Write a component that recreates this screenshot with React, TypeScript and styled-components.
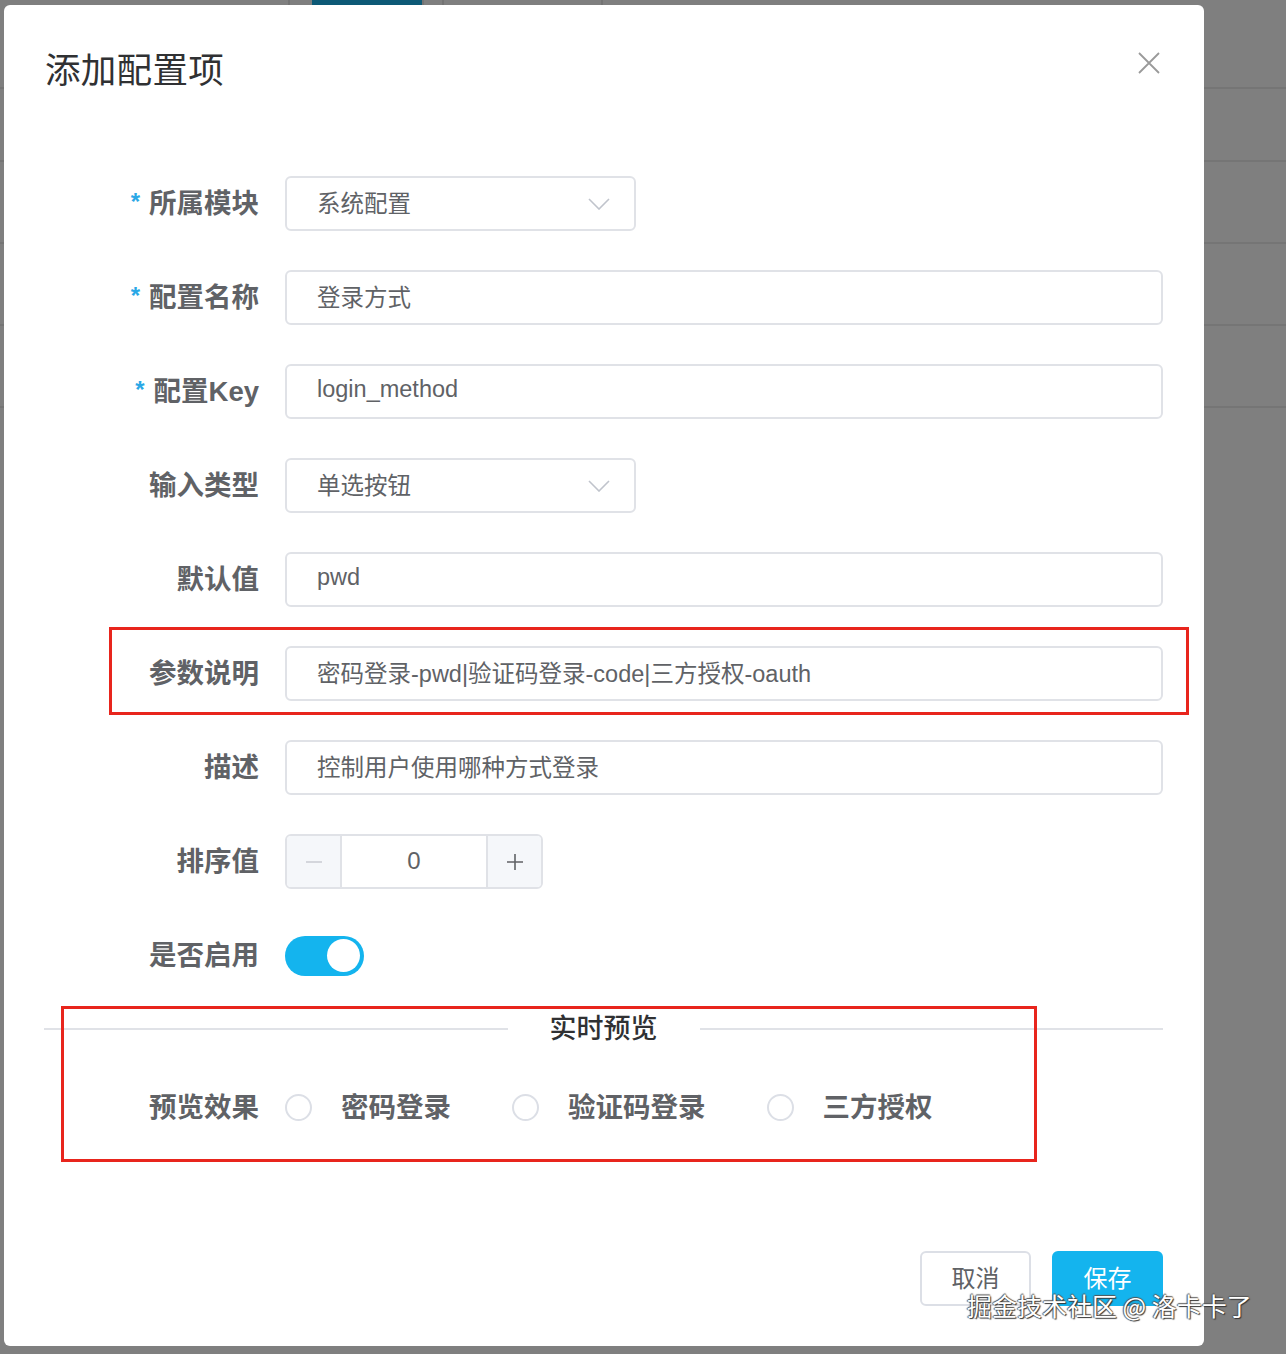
import styled, { createGlobalStyle } from "styled-components";

const GlobalStyle = createGlobalStyle`
  html, body {
    margin: 0;
    padding: 0;
    background: #808080;
  }
  * {
    box-sizing: border-box;
  }
`;

const FONT = `"Liberation Sans", "Noto Sans CJK SC", sans-serif`;
const BRAND = "#14b4ee";

const Stage = styled.div`
  position: relative;
  width: 1286px;
  height: 1354px;
  overflow: hidden;
  font-family: ${FONT};
`;

/* page behind the modal */
const Page = styled.div`
  width: 100%;
  height: 100%;
  background: #fff;
  display: flex;
  flex-direction: column;
`;

const TabStrip = styled.div`
  display: flex;
  height: 5px;
`;

const Tab = styled.div<{ $w: number; $active?: boolean; $last?: boolean }>`
  width: ${(p) => p.$w}px;
  border-right: ${(p) => (p.$last ? "none" : "2px solid #e6e6e6")};
  background: ${(p) => (p.$active ? "#1bb2ec" : "transparent")};
`;

const PageRow = styled.div<{ $h: number }>`
  height: ${(p) => p.$h}px;
  border-bottom: 2px solid #eaeaea;
`;

const Mask = styled.div`
  position: absolute;
  inset: 0;
  background: rgba(0, 0, 0, 0.5);
`;

/* dialog */
const Dialog = styled.div`
  position: absolute;
  left: 4px;
  top: 5px;
  width: 1200px;
  height: 1341px;
  background: #fff;
  border-radius: 6px;
  display: flex;
  flex-direction: column;
`;

const Header = styled.div`
  display: flex;
  align-items: center;
  justify-content: space-between;
  padding: 37px 44px 7px 41px;
  height: 96px;
`;

const Title = styled.div`
  font-family: "Noto Sans CJK SC", sans-serif;
  font-size: 35.5px;
  line-height: 52px;
  color: #303133;
  letter-spacing: 0.3px;
`;

const CloseBtn = styled.div`
  width: 22px;
  height: 22px;
  display: flex;
  align-items: center;
  justify-content: center;
  margin-top: -10px;
`;

const Body = styled.div`
  padding: 75px 41px 0 40px;
  display: flex;
  flex-direction: column;
`;

const Rows = styled.div`
  display: flex;
  flex-direction: column;
  gap: 39px;
`;

const Row = styled.div`
  display: flex;
  align-items: center;
  height: 55px;
  gap: 26px;
`;

const Label = styled.div`
  width: 215px;
  flex-shrink: 0;
  text-align: right;
  font-size: 27.5px;
  font-weight: 700;
  color: #606266;
  white-space: nowrap;
  padding-bottom: 5px;
`;

const Star = styled.span`
  color: #2aa8e6;
  font-size: 24px;
  margin-right: 9px;
  position: relative;
  top: -3px;
`;

const Field = styled.div<{ $w?: number }>`
  width: ${(p) => (p.$w ? `${p.$w}px` : "100%")};
  height: 55px;
  border: 2px solid #e0e2e7;
  border-radius: 6px;
  display: flex;
  align-items: center;
  justify-content: space-between;
  padding: 0 24px 0 30px;
  font-size: 23.5px;
  color: #606266;
  white-space: nowrap;
`;

const FieldText = styled.span`
  padding-bottom: 4px;
`;

const NumberBox = styled.div`
  width: 258px;
  height: 55px;
  border: 2px solid #e0e2e7;
  border-radius: 6px;
  display: flex;
  overflow: hidden;
`;

const StepBtn = styled.div<{ $disabled?: boolean; $side: "left" | "right" }>`
  width: 55px;
  background: #f5f7fa;
  display: flex;
  align-items: center;
  justify-content: center;
  ${(p) => (p.$side === "left" ? "border-right" : "border-left")}: 2px solid #e0e2e7;
  color: ${(p) => (p.$disabled ? "#c8cbd2" : "#606266")};
`;

const NumberValue = styled.div`
  flex: 1;
  display: flex;
  align-items: center;
  justify-content: center;
  font-size: 24px;
  color: #606266;
  padding-bottom: 2px;
`;

const Switch = styled.div<{ $on: boolean }>`
  width: 79px;
  height: 40px;
  border-radius: 20px;
  background: ${(p) => (p.$on ? BRAND : "#dcdfe6")};
  display: flex;
  align-items: center;
  justify-content: ${(p) => (p.$on ? "flex-end" : "flex-start")};
  padding: 0 4px;
`;

const Knob = styled.div`
  width: 33px;
  height: 33px;
  border-radius: 50%;
  background: #fff;
`;

const Divider = styled.div`
  display: flex;
  align-items: center;
  height: 40px;
  margin-top: 26px;
`;

const DividerLine = styled.div`
  flex: 1;
  height: 2px;
  background: #e0e2e7;
`;

const DividerText = styled.div`
  padding: 0 42px 5px;
  font-size: 27px;
  font-weight: 500;
  color: #303133;
`;

const PreviewRow = styled(Row)`
  margin-top: 31px;
`;

const RadioGroup = styled.div`
  display: flex;
  align-items: center;
  gap: 61px;
`;

const RadioItem = styled.div`
  display: flex;
  align-items: center;
  gap: 29px;
  font-size: 27.5px;
  font-weight: 700;
  color: #606266;
`;

const RadioText = styled.span`
  padding-bottom: 5px;
`;

const RadioCircle = styled.div`
  width: 27px;
  height: 27px;
  border-radius: 50%;
  border: 2px solid #dcdfe6;
  background: #fff;
`;

const Footer = styled.div`
  margin-top: auto;
  padding: 0 41px 40px 0;
  display: flex;
  justify-content: flex-end;
  gap: 21px;
`;

const Button = styled.div<{ $primary?: boolean }>`
  width: 111px;
  height: 55px;
  border-radius: 6px;
  display: flex;
  align-items: center;
  justify-content: center;
  font-size: 24px;
  padding-bottom: 4px;
  border: 2px solid ${(p) => (p.$primary ? BRAND : "#dcdfe6")};
  background: ${(p) => (p.$primary ? BRAND : "#fff")};
  color: ${(p) => (p.$primary ? "#fff" : "#606266")};
`;

/* annotation marks drawn over the shot */
const Mark = styled.div<{ $x: number; $y: number; $w: number; $h: number }>`
  position: absolute;
  left: ${(p) => p.$x}px;
  top: ${(p) => p.$y}px;
  width: ${(p) => p.$w}px;
  height: ${(p) => p.$h}px;
  border: 3px solid #e8251d;
  pointer-events: none;
`;

const Watermark = styled.div`
  position: absolute;
  left: 967px;
  top: 1287px;
  font-family: "Noto Sans CJK SC", sans-serif;
  font-size: 25px;
  color: #fff;
  white-space: nowrap;
  text-shadow: 1px 1px 1px #333, -1px 0 1px #555, 0 -1px 1px #555;
`;

const Chevron = () => (
  <svg width="22" height="12" viewBox="0 0 22 12" fill="none">
    <path d="M1 1l10 10L21 1" stroke="#c0c4cc" strokeWidth="1.6" />
  </svg>
);

const fields = [
  { label: "所属模块", required: true, value: "系统配置", select: true },
  { label: "配置名称", required: true, value: "登录方式" },
  { label: "配置Key", required: true, value: "login_method" },
  { label: "输入类型", value: "单选按钮", select: true },
  { label: "默认值", value: "pwd" },
  { label: "参数说明", value: "密码登录-pwd|验证码登录-code|三方授权-oauth" },
  { label: "描述", value: "控制用户使用哪种方式登录" },
];

const options = ["密码登录", "验证码登录", "三方授权"];

export default function App() {
  return (
    <Stage>
      <GlobalStyle />
      <Page>
        <TabStrip>
          <Tab $w={290} />
          <Tab $w={22} $last />
          <Tab $w={112} $active />
          <Tab $w={20} />
          <Tab $w={159} />
          <Tab $w={683} $last />
        </TabStrip>
        <PageRow $h={84} />
        <PageRow $h={73} />
        <PageRow $h={82} />
        <PageRow $h={82} />
        <PageRow $h={82} />
      </Page>
      <Mask />
      <Dialog>
        <Header>
          <Title>添加配置项</Title>
          <CloseBtn>
            <svg width="22" height="22" viewBox="0 0 22 22">
              <path d="M1 1l20 20M21 1L1 21" stroke="#9a9a9a" strokeWidth="1.8" />
            </svg>
          </CloseBtn>
        </Header>
        <Body>
          <Rows>
            {fields.map((f) => (
              <Row key={f.label}>
                <Label>
                  {f.required && <Star>*</Star>}
                  {f.label}
                </Label>
                <Field $w={f.select ? 351 : undefined}>
                  <FieldText>{f.value}</FieldText>
                  {f.select && <Chevron />}
                </Field>
              </Row>
            ))}
            <Row>
              <Label>排序值</Label>
              <NumberBox>
                <StepBtn $side="left" $disabled>
                  <svg width="18" height="18" viewBox="0 0 18 18">
                    <path d="M1 9h16" stroke="currentColor" strokeWidth="1.6" />
                  </svg>
                </StepBtn>
                <NumberValue>0</NumberValue>
                <StepBtn $side="right">
                  <svg width="18" height="18" viewBox="0 0 18 18">
                    <path d="M1 9h16M9 1v16" stroke="currentColor" strokeWidth="1.6" />
                  </svg>
                </StepBtn>
              </NumberBox>
            </Row>
            <Row>
              <Label>是否启用</Label>
              <Switch $on>
                <Knob />
              </Switch>
            </Row>
          </Rows>
          <Divider>
            <DividerLine />
            <DividerText>实时预览</DividerText>
            <DividerLine />
          </Divider>
          <PreviewRow>
            <Label>预览效果</Label>
            <RadioGroup>
              {options.map((o) => (
                <RadioItem key={o}>
                  <RadioCircle />
                  <RadioText>{o}</RadioText>
                </RadioItem>
              ))}
            </RadioGroup>
          </PreviewRow>
        </Body>
        <Footer>
          <Button>取消</Button>
          <Button $primary>保存</Button>
        </Footer>
      </Dialog>
      <Mark $x={109} $y={627} $w={1080} $h={88} />
      <Mark $x={61} $y={1006} $w={976} $h={156} />
      <Watermark>掘金技术社区 @ 洛卡卡了</Watermark>
    </Stage>
  );
}
